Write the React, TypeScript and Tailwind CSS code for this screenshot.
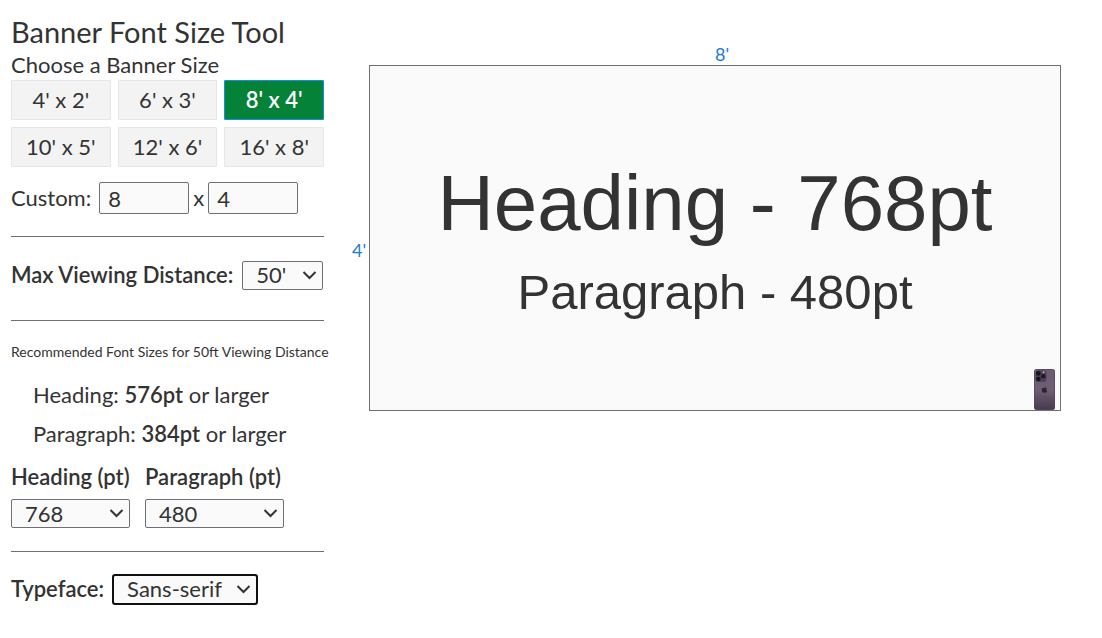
import { useState } from "react";
import type { ComponentProps } from "react";

const bannerSizes = [
    [4, 2],
    [6, 3],
    [8, 4],
    [10, 5],
    [12, 6],
    [16, 8],
];

function Select({ className, ...props }: ComponentProps<"select">) {
    return (
        <div className="relative flex">
            <select
                {...props}
                className={`h-[29px] appearance-none rounded-[2px] border border-[#6f6f78] bg-[#fafafa] pl-[13px] leading-[26px] ${className}`}
            />
            <svg
                className="pointer-events-none absolute top-[10px] right-[6px] h-[9px] w-[15px]"
                viewBox="0 0 15 9"
                fill="none"
                stroke="#333"
                strokeWidth="2"
                aria-hidden="true"
            >
                <path d="M1.5 1 7.5 7 13.5 1" />
            </svg>
        </div>
    );
}

function Phone() {
    return (
        <svg
            className="absolute right-[5px] bottom-0 h-[41px] w-[21px]"
            viewBox="0 0 21 41"
            aria-hidden="true"
        >
            <defs>
                <linearGradient id="body" x1="0" y1="0" x2="0" y2="1">
                    <stop offset="0" stopColor="#6b5b70" />
                    <stop offset="0.5" stopColor="#6f5e74" />
                    <stop offset="1" stopColor="#483a4f" />
                </linearGradient>
            </defs>
            <rect width="21" height="41" rx="2.5" fill="#54465a" />
            <rect x="0.7" y="0.7" width="19.6" height="39.6" rx="2" fill="url(#body)" />
            <rect x="1.5" y="1.5" width="11" height="11.5" rx="3" fill="#4e4257" />
            <circle cx="4.3" cy="4.4" r="2.3" fill="#17141f" />
            <circle cx="4.3" cy="10" r="2.3" fill="#17141f" />
            <circle cx="9.3" cy="7.2" r="2.3" fill="#1d1926" />
            <circle cx="9.6" cy="3.2" r="1" fill="#b9adba" />
            <path
                d="M10.6 18.6c.1-.8.6-1.3 1.2-1.4 0 .8-.5 1.4-1.2 1.4zM10.5 19.2c.5 0 .9-.4 1.5-.4.4 0 .8.2 1 .5-1.1.8-1 2.3.2 2.8-.3.9-.9 1.7-1.5 1.7-.4 0-.6-.2-1.1-.2s-.7.2-1.1.2c-.9 0-1.8-1.7-1.7-2.9 0-1.3.8-2.1 1.6-2.1.5 0 .8.4 1.1.4z"
                fill="#2c2333"
            />
        </svg>
    );
}

export default function App() {
    const [width, setWidth] = useState(8);
    const [height, setHeight] = useState(4);
    const [distance, setDistance] = useState(50);
    const [heading, setHeading] = useState(768);
    const [paragraph, setParagraph] = useState(480);
    const [typeface, setTypeface] = useState("Sans-serif");

    return (
        <main className="flex items-start gap-[28px] pt-[15px] pr-[41px] pb-8 pl-[11px] font-['Lato',sans-serif] text-[22px] leading-[30px] text-[#333]">
            <section className="w-[313px] shrink-0">
                <h1 className="mb-px text-[29px] leading-[34px]">Banner Font Size Tool</h1>
                <h2>Choose a Banner Size</h2>
                <div className="grid grid-cols-3 gap-[7px]">
                    {bannerSizes.map(([w, h]) => (
                        <button
                            key={w}
                            type="button"
                            onClick={() => {
                                setWidth(w);
                                setHeight(h);
                            }}
                            className={
                                w === width && h === height
                                    ? "h-10 rounded-[1px] border border-[#0a94e0] bg-[#038238] font-semibold text-white"
                                    : "h-10 rounded-[1px] border border-[#e6e6e8] bg-[#f3f3f3]"
                            }
                        >
                            {w}' x {h}'
                        </button>
                    ))}
                </div>

                <div className="mt-[15px] flex items-center">
                    <label htmlFor="width" className="mr-2">
                        Custom:
                    </label>
                    <input
                        id="width"
                        value={width}
                        onChange={(e) => setWidth(Number(e.target.value))}
                        className="h-8 w-[90px] rounded-[2px] border border-[#6f6f78] bg-[#fafafa] px-2"
                    />
                    <label htmlFor="height" className="mx-1">
                        x
                    </label>
                    <input
                        id="height"
                        value={height}
                        onChange={(e) => setHeight(Number(e.target.value))}
                        className="h-8 w-[90px] rounded-[2px] border border-[#6f6f78] bg-[#fafafa] px-2"
                    />
                </div>

                <hr className="mt-[22px] mb-[23px] border-[#6f6f6f]" />
                <div className="flex items-center gap-[9px]">
                    <label htmlFor="distance" className="font-semibold whitespace-nowrap">
                        Max Viewing Distance:
                    </label>
                    <Select
                        id="distance"
                        value={distance}
                        onChange={(e) => setDistance(Number(e.target.value))}
                        className="w-[81px]"
                    >
                        <option value={50}>50'</option>
                        <option value={100}>100'</option>
                    </Select>
                </div>
                <hr className="mt-[30px] mb-[21px] border-[#6f6f6f]" />

                <h3 className="text-[14px] leading-5 whitespace-nowrap">
                    Recommended Font Sizes for {distance}ft Viewing Distance
                </h3>
                <ul className="mt-[18px] flex flex-col gap-[9px] pl-[22px]">
                    <li>
                        Heading: <b className="font-semibold">576pt</b> or larger
                    </li>
                    <li>
                        Paragraph: <b className="font-semibold">384pt</b> or larger
                    </li>
                </ul>

                <div className="mt-[13px] flex gap-[15px]">
                    <div className="flex w-[119px] flex-col gap-[7px]">
                        <label htmlFor="heading" className="font-semibold whitespace-nowrap">
                            Heading (pt)
                        </label>
                        <Select
                            id="heading"
                            value={heading}
                            onChange={(e) => setHeading(Number(e.target.value))}
                            className="w-full"
                        >
                            <option>576</option>
                            <option>768</option>
                        </Select>
                    </div>
                    <div className="flex w-[139px] flex-col gap-[7px]">
                        <label htmlFor="paragraph" className="font-semibold whitespace-nowrap">
                            Paragraph (pt)
                        </label>
                        <Select
                            id="paragraph"
                            value={paragraph}
                            onChange={(e) => setParagraph(Number(e.target.value))}
                            className="w-full"
                        >
                            <option>384</option>
                            <option>480</option>
                        </Select>
                    </div>
                </div>
                <hr className="mt-[23px] mb-[22px] border-[#6f6f6f]" />

                <div className="flex items-center gap-[9px]">
                    <label htmlFor="typeface" className="font-semibold">
                        Typeface:
                    </label>
                    <Select
                        id="typeface"
                        value={typeface}
                        onChange={(e) => setTypeface(e.target.value)}
                        className="w-[144px] outline-2 -outline-offset-1 outline-[#101010]"
                    >
                        <option>Sans-serif</option>
                        <option>Serif</option>
                    </Select>
                </div>
            </section>

            <section className="grid flex-1 grid-cols-[17px_1fr] pt-[29px] text-[18px] leading-[21px] text-[#1c7cd0]">
                <div className="col-start-2 pl-[14px] text-center">{width}'</div>
                <div className="flex items-center pt-[25px]">{height}'</div>
                <div
                    className={`relative flex aspect-[2/1] flex-col items-center justify-center border border-[#6f6f78] bg-[#fafafa] pt-0.5 text-[#333] ${
                        typeface === "Serif"
                            ? "font-['Liberation_Serif',serif]"
                            : "font-['Liberation_Sans',sans-serif]"
                    }`}
                >
                    <p className="text-[78px] leading-[92px]">Heading - {heading}pt</p>
                    <p className="pt-[14px] text-[49px] leading-[58px]">Paragraph - {paragraph}pt</p>
                    <Phone />
                </div>
            </section>
        </main>
    );
}
